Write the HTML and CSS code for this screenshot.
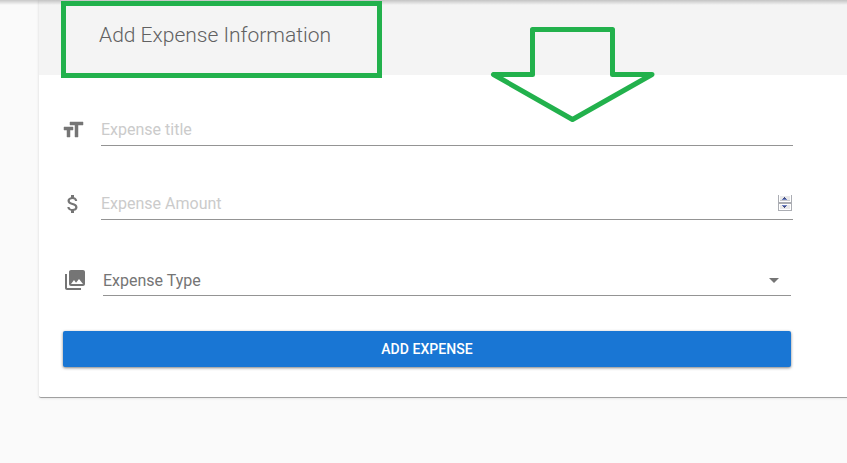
FILE: index.html
```html
<!DOCTYPE html>
<html lang="en">
<head>
<meta charset="utf-8">
<title>Add Expense</title>
<link rel="stylesheet" href="styles.css">
</head>
<body>
<main class="card">
  <header class="card-header"><h1>Add Expense Information</h1></header>
  <form class="form">
    <div class="row">
      <svg class="icon" viewBox="0 0 24 24"><path d="M9 4v3h5v12h3V7h5V4H9zm-6 8h3v7h3v-7h3V9H3v3z" stroke="#757575" stroke-width=".5"/></svg>
      <div class="field"><span class="placeholder">Expense title</span></div>
    </div>
    <div class="row">
      <svg class="icon" viewBox="0 0 24 24"><path d="M11.8 10.9c-2.27-.59-3-1.2-3-2.15 0-1.09 1.01-1.85 2.7-1.85 1.78 0 2.44.85 2.5 2.1h2.21c-.07-1.72-1.12-3.3-3.21-3.81V3h-3v2.16c-1.94.42-3.5 1.68-3.5 3.61 0 2.31 1.91 3.46 4.7 4.13 2.5.6 3 1.48 3 2.41 0 .69-.49 1.79-2.7 1.79-2.06 0-2.87-.92-2.98-2.1h-2.2c.12 2.19 1.76 3.42 3.68 3.83V21h3v-2.15c1.95-.37 3.5-1.5 3.5-3.55 0-2.84-2.43-3.81-4.7-4.4z"/></svg>
      <div class="field">
        <span class="placeholder">Expense Amount</span>
        <svg class="spinner" viewBox="0 0 14 16" shape-rendering="crispEdges">
          <path fill="#abadb3" d="M0 0h14v16H0z"/>
          <path fill="#fff" d="M1 0h12v7H1zM1 9h12v6H1z"/>
          <path fill="#e9e9ea" d="M2 1h10v5H2zM2 10h10v4H2z"/>
          <path fill="#c9cacd" d="M2 5h10v1H2z"/>
          <path fill="#454f85" d="M6 2h1v1H6zM5 3h3v1H5zM5 11h3v1H5zM6 12h1v1H6z"/>
          <path fill="#6e82c4" d="M4 4h5v1H4zM4 10h5v1H4z"/>
        </svg>
      </div>
    </div>
    <div class="row row-select">
      <svg class="icon" viewBox="0 0 24 24"><path d="M22 16V4c0-1.1-.9-2-2-2H8c-1.1 0-2 .9-2 2v12c0 1.1.9 2 2 2h12c1.1 0 2-.9 2-2zm-11-4l2.03 2.71L16 11l4 5H8l3-4zM2 6v14c0 1.1.9 2 2 2h14v-2H4V6H2z"/></svg>
      <div class="field">
        <span class="value">Expense Type</span>
        <svg class="icon caret" viewBox="0 0 24 24"><path d="M7 10l5 5 5-5z"/></svg>
      </div>
    </div>
    <button class="submit" type="button">ADD EXPENSE</button>
  </form>
</main>
<div class="top-shadow"></div>
<div class="highlight"></div>
<svg class="arrow" viewBox="0 0 170 105"><path d="M42.500 9.500h80v45h39.500L82.500 99.500 3.500 54.500h39z"/></svg>
</body>
</html>
```
FILE: styles.css
```css
* { box-sizing: border-box; }
body {
  margin: 0;
  height: 463px;
  overflow: hidden;
  background: #fafafa;
  font-family: Roboto, sans-serif;
  color: #757575;
}
.card {
  height: 398px;
  margin-left: 39px;
  margin-right: -20px;
  background: #fff;
  border-radius: 0 0 2px 2px;
  overflow: hidden;
  border-bottom: 1px solid #a0a0a0;
  box-shadow: 0 0 3px rgba(0, 0, 0, .15);
}
.card-header {
  height: 75px;
  padding: 22px 0 0 60px;
  background: #f4f4f4;
}
h1 {
  margin: 0;
  font-size: 21px;
  line-height: 26px;
  font-weight: 300;
  color: #616161;
}
.form { padding: 37px 0 0 22px; }
.row {
  display: flex;
  width: 732px;
  height: 34px;
  margin-bottom: 40px;
}
.icon {
  flex: none;
  width: 24px;
  height: 24px;
  margin-top: 6px;
  fill: #757575;
}
.field {
  display: flex;
  flex: 1;
  justify-content: space-between;
  margin-left: 16px;
  border-bottom: 1px solid #949494;
  font-size: 16px;
  line-height: 35px;
}
.placeholder { color: #cbcbcb; }
.spinner { width: 14px; height: 16px; margin: 9px 1px 0 0; }
.row-select {
  width: 728px;
  height: 36px;
  margin: 0 0 35px 2px;
}
.row-select .icon { margin-top: 8px; }
.row-select .field { line-height: 41px; }
.row-select .caret { margin-right: 5.5px; }
.submit {
  display: block;
  width: 728px;
  height: 36px;
  margin-left: 2px;
  padding: 0;
  border: 0;
  border-radius: 2px;
  background: #1976d4;
  box-shadow: 0 1px 3px rgba(0, 0, 0, .5);
  color: #fff;
  font: 500 14px/36px Roboto, sans-serif;
  letter-spacing: .07px;
}
.top-shadow {
  position: absolute;
  top: 0;
  left: 0;
  width: 100%;
  height: 5px;
  background: linear-gradient(rgba(0, 0, 0, .2), rgba(0, 0, 0, 0));
}
.highlight {
  position: absolute;
  top: 1px;
  left: 61px;
  width: 321px;
  height: 77px;
  border: 5px solid #22b14c;
}
.arrow {
  position: absolute;
  top: 20px;
  left: 490px;
  width: 170px;
  height: 105px;
  fill: none;
  stroke: #22b14c;
  stroke-width: 5;
  stroke-linejoin: round;
}
```
